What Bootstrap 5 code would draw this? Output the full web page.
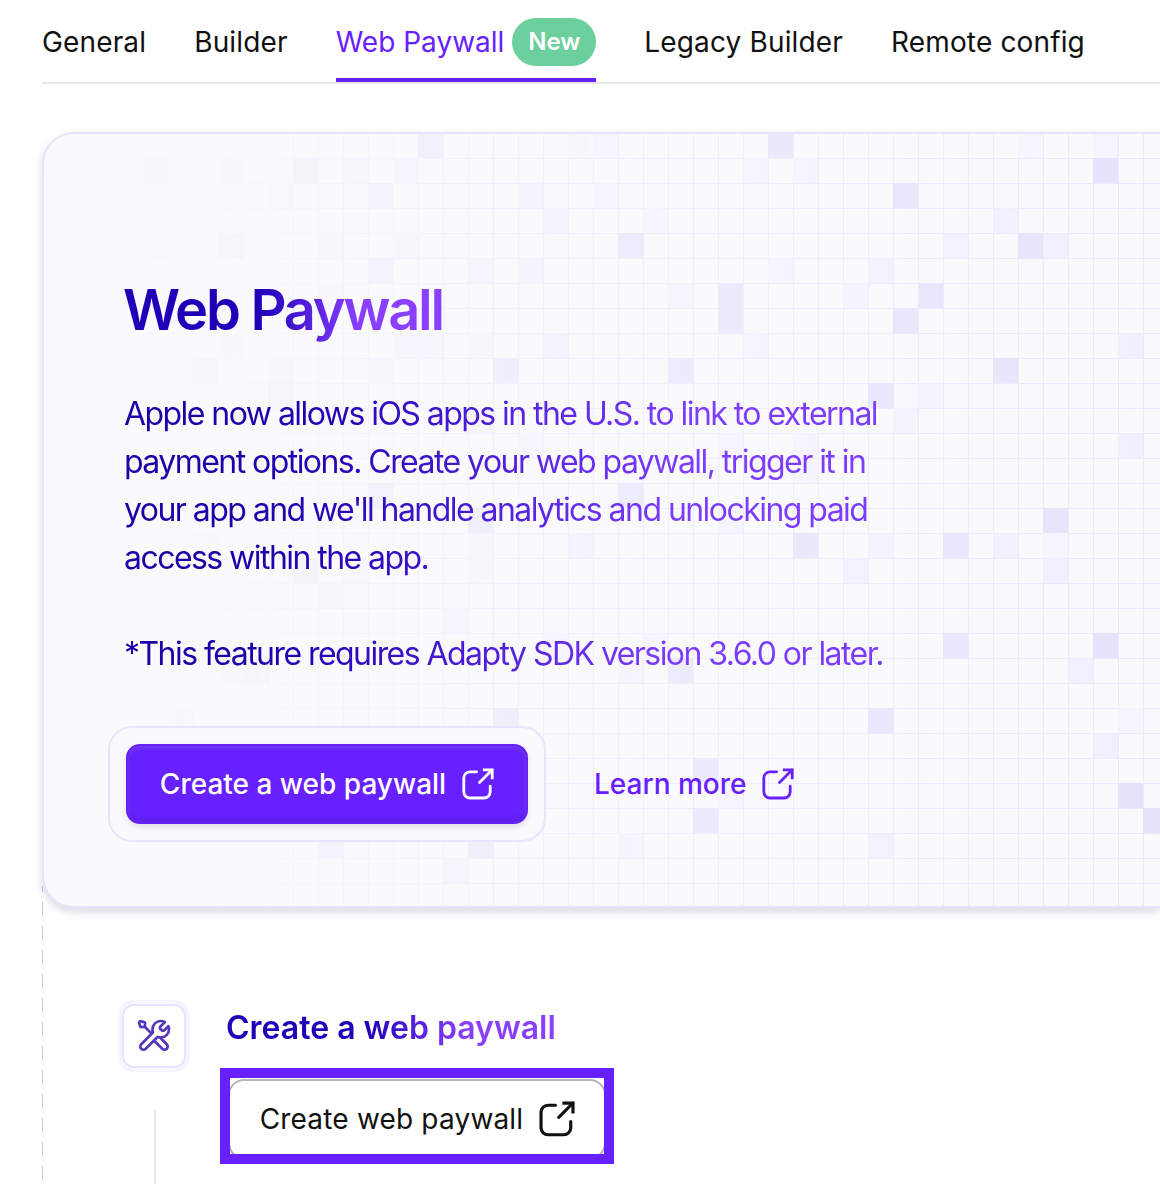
<!DOCTYPE html>
<html lang="en">
<head>
<meta charset="utf-8">
<meta name="viewport" content="width=device-width, initial-scale=1">
<title>Web Paywall</title>
<link href="https://cdn.jsdelivr.net/npm/bootstrap@5.3.0/dist/css/bootstrap.min.css" rel="stylesheet">
<style>
  body { font-family: Inter, "Liberation Sans", sans-serif; color: #111; background: #fff; overflow: hidden; height: 1184px; }
  .page-wrap { padding-left: 42px; height: 1184px; overflow: hidden; }
  .tab-bar { height: 84px; border-bottom: 2px solid #e6e6e6; gap: 48px; }
  .tab-bar .nav-link { color: #111; font-size: 28px; font-weight: 400; line-height: 48px; padding: 18px 0 12px; border-bottom: 4px solid transparent; white-space: nowrap; letter-spacing: .15px; gap: 8px; }
  .tab-bar .nav-link.active { color: #6720ff; border-color: #6720ff; letter-spacing: 0; }
  .tag-new { background: #6bcf9e; color: #fff; font-size: 24px; font-weight: 600; letter-spacing: 0; height: 48px; width: 84px; border-radius: 24px; }
  .hero { margin-top: 48px; height: 776px; border: 2px solid #e8e4fd; border-right: 0; border-radius: 32px 0 0 32px; background: #fafafc; box-shadow: 0 4px 8px rgba(40,20,90,.16); position: relative; z-index: 1; }
  .hero-grid { position: absolute; left: -1px; top: -1px; }
  .hero-body { position: relative; padding: 142px 0 0 80px; }
  .grad { color: transparent; -webkit-background-clip: text; background-clip: text; width: max-content; }
  .hero-title { font-size: 56px; font-weight: 600; line-height: 68px; margin: 0 0 46px -1px; letter-spacing: -2.25px; padding-right: 3px; background-image: linear-gradient(90deg, #1f00b8 42%, #8a3fff 73%); }
  .hero-text { font-size: 32px; line-height: 48px; margin: 0; letter-spacing: -1.55px; padding-right: 2px; background-image: linear-gradient(93deg, #1c00a8 15%, #2504b6 27%, #7c3cff 72%); }
  .cta-row { margin: 48px 0 0 -16px; gap: 48px; }
  .cta-frame { border: 2px solid #e8e4fd; border-radius: 24px; padding: 16px; background: #fafafc; }
  .cta-main { width: 402px; height: 80px; border-radius: 14px; background: #6720ff; border: 2px solid #6520fa; color: #fff; box-shadow: inset 0 2px 4px rgba(255,255,255,.14), inset 0 -1px 6px rgba(60,40,140,.4), 0 3px 6px rgba(0,0,0,.1); }
  .btn-label { font-size: 28px; font-weight: 400; letter-spacing: .18px; line-height: 40px; }
  .cta-main .btn-label, .link-more .btn-label { font-weight: 500; letter-spacing: 0; }
  .cta-main:hover { background: #6720ff; color: #fff; }
  .link-more { color: #6720ff; }
  .ico { fill: none; stroke: currentColor; stroke-width: 2.8; }
  .steps { height: 300px; margin-top: -22px; padding: 114px 0 0 76px; gap: 30px; background: repeating-linear-gradient(180deg, #cdc4f9 0 14px, transparent 14px 24px) 0 -8px / 1px 320px no-repeat; }
  .rail { width: 72px; gap: 38px; }
  .step-icon { width: 72px; height: 72px; border: 4px solid #f5f4ff; border-radius: 16px; }
  .step-icon > span { width: 64px; height: 64px; border: 2px solid #e8e4fd; border-radius: 12px; background: #fff; color: #5636bd; }
  .rail-line { width: 2px; height: 120px; background: #e8e4fd; margin-left: 2px; }
  .step-col { padding-top: 8px; }
  .step-title { font-size: 32px; font-weight: 600; line-height: 40px; margin: 0 0 20px 6px; background-image: linear-gradient(90deg, #1f00b8 43%, #8a3fff 72%); }
  .focus-box { border: 10px solid #6720ff; width: 394px; height: 96px; overflow: hidden; }
  .outline-btn { width: 378px; height: 80px; margin: 1px 0 0 -2px; padding-left: 1px; border: 2px solid #b5b5b5; border-radius: 16px; background: #fff; flex: none; }
</style>
</head>
<body>
<svg width="0" height="0" class="position-absolute">
  <symbol id="open" viewBox="0 0 32 32">
    <path d="M14.6 3.8H8A6.2 6.2 0 0 0 1.8 10V23.800a6.200 6.200 0 0 0 6.200 6.200H22a6.200 6.200 0 0 0 6.200-6.200V18.200" stroke-linecap="round"/>
    <path d="M17.500 14.600 30 2" stroke-linecap="round"/><path d="M20.800 1.900H30.200V11.200"/>
  </symbol>
</svg>
<div class="page-wrap">
  <nav class="nav tab-bar flex-nowrap">
    <a class="nav-link" href="#">General</a>
    <a class="nav-link" href="#">Builder</a>
    <a class="nav-link active d-flex" href="#"><span>Web Paywall</span><span class="tag-new d-flex align-items-center justify-content-center">New</span></a>
    <a class="nav-link" href="#">Legacy Builder</a>
    <a class="nav-link" href="#">Remote config</a>
  </nav>

  <section class="hero">
    <svg class="hero-grid" width="1117" height="774">
      <defs>
        <linearGradient id="fade" gradientUnits="userSpaceOnUse" x1="0" y1="0" x2="1117" y2="0">
          <stop offset="0" stop-color="#fff" stop-opacity="0"/><stop offset=".12" stop-color="#fff" stop-opacity=".1"/><stop offset=".45" stop-color="#fff" stop-opacity=".56"/><stop offset="1" stop-color="#fff"/>
        </linearGradient>
        <mask id="fadeMask" maskUnits="userSpaceOnUse" x="0" y="0" width="1117" height="774"><rect width="1117" height="774" fill="url(#fade)"/></mask>
        <pattern id="cells" width="25" height="25" patternUnits="userSpaceOnUse"><path d="M0 .5H25M.5 0V25" stroke="#ebe7fd" fill="none"/></pattern>
        <clipPath id="inner"><path d="M31 1H1117V773H31A30 30 0 0 1 1 743V31A30 30 0 0 1 31 1Z"/></clipPath>
      </defs>
      <g clip-path="url(#inner)"><g mask="url(#fadeMask)"><rect width="1117" height="774" fill="url(#cells)"/><g id="tiles"></g></g></g>
    </svg>
    <div class="hero-body">
      <h1 class="hero-title grad">Web Paywall</h1>
      <p class="hero-text grad">Apple now allows iOS apps in the U.S. to link to external<br>payment options. Create your web paywall, trigger it in<br>your app and we'll handle analytics and unlocking paid<br>access within the app.<br><br>*This feature requires Adapty SDK version 3.6.0 or later.</p>
      <div class="cta-row d-flex align-items-center">
        <div class="cta-frame">
          <a href="#" class="btn cta-main d-flex align-items-center justify-content-center gap-3 p-0"><span class="btn-label">Create a web paywall</span><svg class="ico" width="32" height="32"><use href="#open"/></svg></a>
        </div>
        <a href="#" class="link-more d-flex align-items-center gap-3 text-decoration-none"><span class="btn-label">Learn more</span><svg class="ico" width="32" height="32"><use href="#open"/></svg></a>
      </div>
    </div>
  </section>

  <section class="steps d-flex align-items-start">
    <div class="rail d-flex flex-column align-items-center">
      <div class="step-icon"><span class="d-flex align-items-center justify-content-center">
        <svg width="36" height="36" viewBox="0 0 24 24" fill="none" stroke="currentColor" stroke-width="1.8" stroke-linecap="round" stroke-linejoin="round"><path d="M6 6L10.5 10.5M6 6H3L2 3L3 2L6 3V6ZM19.259 2.741L16.631 5.369C16.235 5.765 16.037 5.963 15.963 6.191C15.898 6.392 15.898 6.608 15.963 6.809C16.037 7.037 16.235 7.235 16.631 7.631L16.869 7.869C17.265 8.265 17.463 8.463 17.691 8.537C17.892 8.602 18.108 8.602 18.309 8.537C18.537 8.463 18.735 8.265 19.131 7.869L21.589 5.411C21.854 6.055 22 6.76 22 7.5C22 10.538 19.538 13 16.5 13C16.134 13 15.776 12.964 15.43 12.896C14.944 12.8 14.7 12.752 14.553 12.767C14.397 12.782 14.319 12.806 14.18 12.88C14.05 12.95 13.919 13.081 13.657 13.343L6.5 20.5C5.672 21.328 4.328 21.328 3.5 20.5C2.672 19.672 2.672 18.328 3.5 17.5L10.657 10.343C10.919 10.081 11.05 9.95 11.12 9.819C11.194 9.681 11.218 9.603 11.233 9.447C11.248 9.299 11.2 9.056 11.104 8.57C11.036 8.224 11 7.866 11 7.5C11 4.462 13.462 2 16.5 2C17.505 2 18.448 2.27 19.259 2.741ZM12 15L17.5 20.5C18.328 21.328 19.672 21.328 20.5 20.5C21.328 19.672 21.328 18.328 20.5 17.5L15.975 12.975C15.655 12.945 15.343 12.887 15.041 12.804C14.652 12.698 14.225 12.775 13.94 13.06L12 15Z"/></svg>
      </span></div>
      <div class="rail-line"></div>
    </div>
    <div class="step-col">
      <h2 class="step-title grad">Create a web paywall</h2>
      <div class="focus-box">
        <a href="#" class="outline-btn d-flex align-items-center justify-content-center gap-3 text-decoration-none text-reset"><span class="btn-label">Create web paywall</span><svg class="ico" width="36" height="36"><use href="#open"/></svg></a>
      </div>
    </div>
  </section>
</div>
<script>
  // Tinted tiles per grid row: column number followed by its tone.
  const tones = { D: ['#e1defb', .82], M: ['#efecff', .8], L: ['#f3f0ff', .8], B: ['#f3f4ff', .85] };
  const rows = {
    0: '15D 21B 22L 29D 39B 42B', 1: '4D 7L 10D 12M 14M 28L 30L 42D', 2: '9L 13D 19M 22L 34D',
    3: '20M 24L 38M', 4: '4M 7D 11L 14L 23D 36M 39D 40M', 5: '13D 17M 19M 29L 33M',
    6: '11L 25L 27D 32L 35D', 7: '27D 34D', 8: '3M 7L 14M 15M 17L 20M 28L 43M',
    9: '6D 9M 13M 18D 25D 38D', 10: '9D 33D 35L', 11: '17M 34L', 12: '19L 27L 30L 43M', 13: '30L',
    14: '13D 23D', 15: '17D 27L 40D', 16: '6L 17L 21M 30D 33L 36D 38M 40B', 17: '3M 10D 12L 17L 32M 40M',
    18: '11M', 19: '16M', 20: '5L 20L 24L 36D 42D', 21: '7L 8D 23L 25D 41M', 23: '5M 18D 33D 43B',
    24: '42M', 25: '26D', 26: '27L 43D', 27: '26D 44D', 28: '11D 17D 23L 33M', 29: '16M'
  };
  let out = '';
  for (const [r, list] of Object.entries(rows))
    for (const t of list.split(' ')) {
      const [fill, op] = tones[t.slice(-1)];
      out += `<rect x="${parseInt(t) * 25}" y="${r * 25}" width="25" height="25" fill="${fill}" fill-opacity="${op}"/>`;
    }
  document.getElementById('tiles').innerHTML = out;
</script>
<script src="https://cdn.jsdelivr.net/npm/bootstrap@5.3.0/dist/js/bootstrap.bundle.min.js"></script>
</body>
</html>
